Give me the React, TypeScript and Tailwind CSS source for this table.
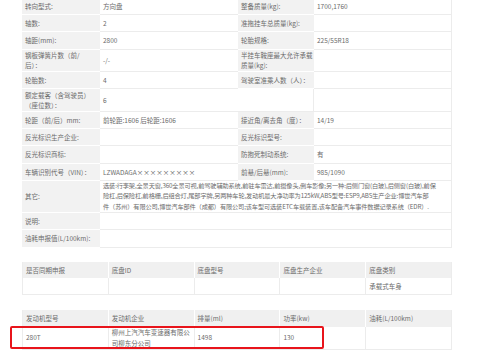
import React from 'react';

type Row = {
	l1: React.ReactNode;
	v1?: React.ReactNode;
	l2?: React.ReactNode;
	v2?: React.ReactNode;
	h: string;
	full?: boolean;
	blankL2?: boolean;
	tight?: boolean;
};

const rows: Row[] = [
	{l1: '转向型式:', v1: '方向盘', l2: '整备质量(kg):', v2: '1700,1760', h: 'h-[17.3px]'},
	{l1: '轴数:', v1: '2', l2: '准拖挂车总质量(kg):', h: 'h-[17.3px]'},
	{l1: '轴距(mm):', v1: '2800', l2: '轮胎规格:', v2: '225/55R18', h: 'h-[17.3px]'},
	{l1: <>钢板弹簧片数（前/<br/>后）：</>, v1: '-/-', l2: <>半挂车鞍座最大允许承载<br/>质量(kg):</>, h: 'h-[22.5px]'},
	{l1: '轮胎数:', v1: '4', l2: '驾驶室准乘人数（人）：', h: 'h-[17.3px]'},
	{l1: <>额定载客（含驾驶员）<br/>（座位数）：</>, v1: '6', blankL2: true, h: 'h-[22.5px]'},
	{l1: '轮距（前/后）mm:', v1: '前轮距:1606 后轮距:1606', l2: '接近角/离去角（度）：', v2: '14/19', h: 'h-[17.3px]'},
	{l1: '反光标识生产企业:', l2: '反光标识型号:', h: 'h-[17.3px]'},
	{l1: '反光标识商标:', l2: '防抱死制动系统:', v2: '有', h: 'h-[17.3px]'},
	{l1: '车辆识别代号（VIN）：', v1: 'LZWADAGA×××××××××', l2: '前悬/后悬(mm):', v2: '985/1090', h: 'h-[17.3px]'},
	{
		l1: '其它:',
		v1: <>
			选装:行李架,全景天窗,360全景可视,前驾驶辅助系统,前驻车雷达,前摄像头,倒车影像;另一种:后侧门窗(白玻),后侧窗(白玻),前保<br/>
			险杠,后保险杠,前格栅,后组合灯,尾部字牌,另两种车轮,发动机最大净功率为125kW,ABS型号:ESP9,ABS生产企业:博世汽车部<br/>
			件（苏州）有限公司,博世汽车部件（成都）有限公司;该车型可选装ETC车载装置,该车配备汽车事件数据记录系统（EDR）.
		</>,
		full: true,
		tight: true,
		h: 'h-[32px]'
	},
	{l1: '说明:', full: true, h: 'h-[17.3px]'},
	{l1: '油耗申报值(L/100km):', full: true, h: 'h-[17.3px]'},
];

const labelCls = 'bg-[#f2f2f2] border-b border-white pl-[3px] flex items-center';
const valueCls = 'border-b border-[#ececec] pl-[3px] flex items-center whitespace-nowrap overflow-hidden';

function SmallTable({head, body, bodyH, mark}: {head: string[]; body: React.ReactNode[]; bodyH: string; mark?: boolean}) {
	return (
		<div className="w-[430px] border-l border-[#ececec]">
			<div className="grid grid-cols-5 h-[16.5px] bg-[#f0f0f0]">
				{head.map((t, i) => (
					<div key={i} className="pl-[3px] flex items-center border-r border-white last:border-[#ececec]">{t}</div>
				))}
			</div>
			<div className={`relative grid grid-cols-5 ${bodyH}`}>
				{body.map((t, i) => (
					<div key={i} className="pl-[3px] flex items-center border-r border-b border-[#ececec]">{t}</div>
				))}
				{mark && (
					<div className="absolute left-[-13px] top-[-1px] w-[314px] h-[23px] border-2 border-[#e8141b] rounded-[2px]"/>
				)}
			</div>
		</div>
	);
}

export default function App() {
	return (
		<div
			className="w-[480px] h-[360px] overflow-hidden bg-white text-[#6b6b6b] text-[6.5px] leading-[10.5px] pl-[22px]"
			style={{fontFamily: '"Noto Sans CJK SC", "Noto Sans", sans-serif'}}
		>
			<div className="-mt-[2.3px] w-[430px] grid grid-cols-[78px_138px_76px_138px] border-r border-[#ececec]">
				{rows.map((r, i) => (
					<React.Fragment key={i}>
						<div className={`${labelCls} ${r.h}`}>{r.l1}</div>
						{r.full ? (
							<div className={`${valueCls} ${r.h} col-span-3 ${r.tight ? 'text-[6.2px] tracking-[-0.12px]' : ''}`}>
								<div>{r.v1}</div>
							</div>
						) : (
							<>
								<div className={`${valueCls} ${r.h}`}>{r.v1}</div>
								<div className={`${r.blankL2 ? 'border-b border-[#ececec] border-r' : labelCls} ${r.h} pl-[3px] flex items-center`}>{r.l2}</div>
								<div className={`${valueCls} ${r.h}`}>{r.v2}</div>
							</>
						)}
					</React.Fragment>
				))}
			</div>

			<div className="mt-[14px]">
				<SmallTable
					head={['是否同期申报', '底盘ID', '底盘型号', '底盘生产企业', '底盘类别']}
					body={['', '', '', '', '承载式车身']}
					bodyH="h-[17px]"
				/>
			</div>

			<div className="mt-[15px]">
				<SmallTable
					head={['发动机型号', '发动机企业', '排量(ml)', '功率(kw)', '油耗(L/100km)']}
					body={['280T', <>柳州上汽汽车变速器有限公<br/>司柳东分公司</>, '1498', '130', '']}
					bodyH="h-[23px]"
					mark
				/>
			</div>
		</div>
	);
}
